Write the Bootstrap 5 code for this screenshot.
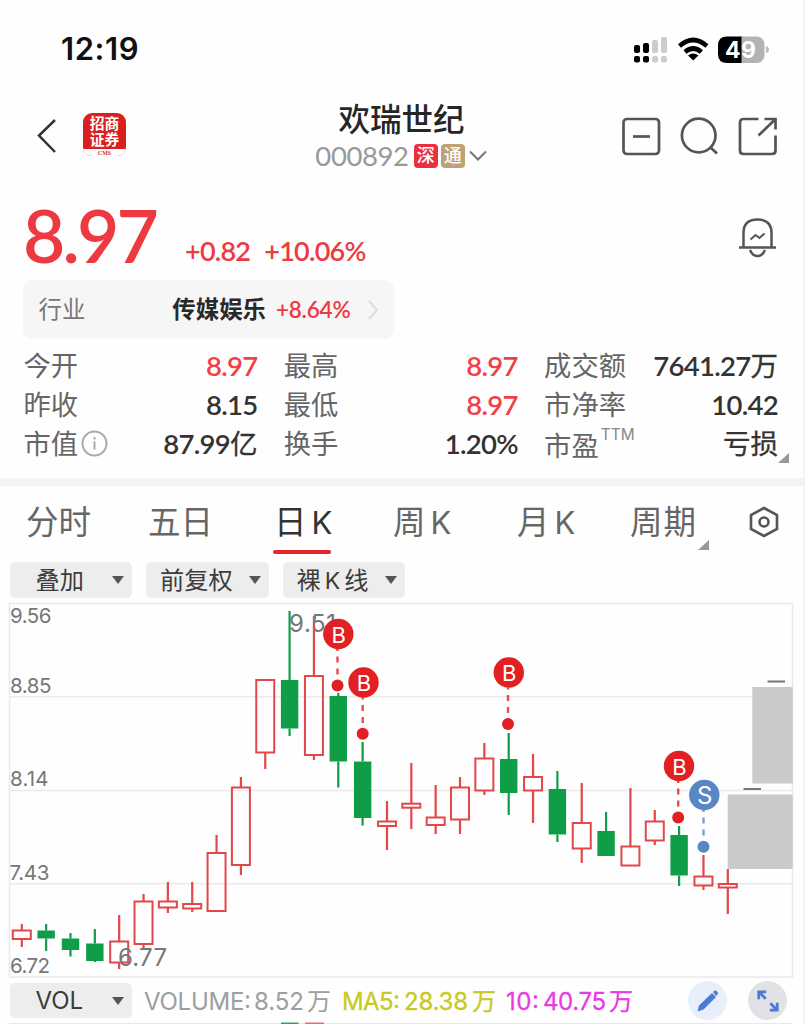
<!DOCTYPE html>
<html lang="zh-CN">
<head>
<meta charset="utf-8">
<meta name="viewport" content="width=device-width, initial-scale=1">
<title>欢瑞世纪 000892</title>
<link href="https://cdn.jsdelivr.net/npm/bootstrap@5.3.0/dist/css/bootstrap.min.css" rel="stylesheet">
<style>
body{font-family:Lato,"Noto Sans CJK SC",sans-serif;background:#fefefe;color:#333;overflow:hidden;line-height:1}
svg{display:block;flex:none}
.screen{width:805px;height:1024px;border-right:2px solid #f4f4f4;overflow:hidden;white-space:nowrap}
.up{color:#ec3a40}
.statusbar{height:97px;padding:0 33px 0 61px}
.clock{font:600 31px/1 Inter,sans-serif;color:#111;letter-spacing:.6px}
.topbar{height:78px;padding:0 25px 0 36px}
.side{width:180px}
.logo{width:43px;height:43px;border-radius:9px;background:#d9201f;color:#fff;overflow:hidden;font-size:14.8px;font-weight:700;line-height:15.5px;padding-top:3px;margin-left:25px;margin-top:-3px}
.logo small{display:block;background:#fff;color:#c33;font:700 6px/9px "Liberation Serif",serif;margin-top:2px;height:9px}
.heading{margin-right:11px;padding-top:1px}
.stock{font-size:31.5px;font-weight:500;color:#262626;line-height:38px}
.code{font-size:27.5px;color:#999;line-height:36px;letter-spacing:-.4px;margin-right:2px}
.tag{width:24px;height:24px;border-radius:4px;color:#fff;font-size:18px;line-height:23px;text-align:center;font-weight:500}
.pricebar{height:105px;padding:0 25px 0 23px}
.price{font-size:73px;font-weight:600;letter-spacing:-2.8px;width:162px}
.delta{font-size:27px;font-weight:600;letter-spacing:-.75px;padding-top:46px}
.industry{width:371px;height:59px;margin-left:22.5px;border-radius:9px;background:#f6f6f6;padding:0 15px 0 16px;font-size:23.4px}
.stats{display:grid;grid-template-columns:234px 234px 234px;column-gap:26.3px;grid-auto-rows:39px;padding:7px 0 0 23.5px;height:139px}
.stats dt{font-weight:400;font-size:27.3px;color:#666}
.stats dd{font-weight:600;font-size:27.5px;color:#333;margin:0;letter-spacing:-.7px}
.stats dd.up{color:#f24046}
.stats dd span{font-weight:400;letter-spacing:0;-webkit-text-stroke:.3px #333}
.ttm{font:400 15.5px/1 Inter,sans-serif;color:#888;margin:-18px 0 0 2px}
.fold{width:0;height:0;border-left:11px solid transparent;border-bottom:10px solid #999}
.divide{height:8px;background:#f3f3f3}
.periods{height:76px;font-size:32.5px;color:#666}
.periods .tabk{position:relative;height:68px;line-height:71px}
.periods i{font-style:normal;font-family:Inter,sans-serif;font-size:31px;margin-left:5px}
.periods .on{color:#333}
.periods .on:after{content:"";position:absolute;left:-1px;right:0;bottom:0;height:4px;border-radius:2px;background:#e7262b}
.pick{width:122.5px;height:35.5px;background:#ededed;border-radius:5px;font-size:24.2px;color:#3c3c3c;padding-top:1px}
.pick:after{content:"";border:6px solid transparent;border-top:8px solid #555;border-bottom:0}
.vols{font-family:Inter,"Noto Sans CJK SC",sans-serif;font-size:23px}
.round{width:39px;height:39px;border-radius:50%}
.ax{font-family:Inter,sans-serif;fill:#777}
</style>
</head>
<body>
<main class="screen d-flex flex-column">
  <div class="statusbar d-flex align-items-center justify-content-between">
    <span class="clock">12:19</span>
    <svg width="138" height="30" viewBox="632 33 138 30">
      <g fill="#000"><rect x="634" y="44" width="6" height="8" rx="2"/><rect x="643" y="42" width="6" height="10" rx="2"/><rect x="634" y="55" width="6" height="6.5" rx="2"/><rect x="643" y="55" width="6" height="6.5" rx="2"/></g>
      <g fill="#ccc"><rect x="652" y="39" width="6" height="13" rx="2"/><rect x="661" y="36" width="6" height="16" rx="2"/><rect x="652" y="55" width="6" height="6.5" rx="2"/><rect x="661" y="55" width="6" height="6.5" rx="2"/></g>
      <g fill="none" stroke="#000" stroke-width="4.6"><path d="M679.5 45q13.700-12 27.400 0M685 51q8.200-7 16.400 0"/></g>
      <path d="M688 54.500q5.200-4 10.400 0L693.200 59.500z"/>
      <path d="M727 35.500h15v26.500h-15q-9 0-9-9v-8.500q0-9 9-9z"/><path d="M741.500 35.500h14q9 0 9 9v8.500q0 9-9 9h-14z" fill="#b3b3b3"/><path d="M766 45q3 1 3 3.500t-3 3.500z" fill="#bbb"/>
      <text x="740.500" y="57" text-anchor="middle" font-family="Inter" font-weight="700" font-size="23" fill="#fff" textLength="31">49</text>
    </svg>
  </div>

  <header class="topbar d-flex align-items-center justify-content-between">
    <div class="side d-flex align-items-center">
      <svg width="22" height="38" viewBox="0 0 22 38" fill="none" stroke="#333" stroke-width="2.500"><path d="M19 3L3 18.500 19 35"/></svg>
      <div class="logo text-center">招商<br>证券<small>CMS</small></div>
    </div>
    <div class="heading d-flex flex-column align-items-center">
      <div class="stock">欢瑞世纪</div>
      <div class="d-flex align-items-center" style="gap:3px">
        <span class="code">000892</span><span class="tag" style="background:#ea2f3d">深</span><span class="tag" style="background:#bca274">通</span>
        <svg width="20" height="14" viewBox="0 0 20 14" fill="none" stroke="#777" stroke-width="2"><path d="M2 2.500l8 8 8-8"/></svg>
      </div>
    </div>
    <div class="side d-flex justify-content-end">
      <svg width="158" height="40" viewBox="620 116 158 40" fill="none" stroke="#555" stroke-width="2.700">
        <rect x="623.500" y="119" width="35.500" height="35" rx="3.500"/><path d="M633 136.500h17"/>
        <circle cx="698.700" cy="135.500" r="16.800"/><path d="M710 147l7 6.500"/>
        <path d="M758.500 119h-15q-3.500 0-3.500 3.500v28q0 3.500 3.500 3.500h28.500q3.500 0 3.500-3.500v-15M758.500 135.500L775 119.500M764.500 119h11v10.500"/>
      </svg>
    </div>
  </header>

  <section class="pricebar d-flex align-items-center">
    <span class="price up" style="padding-top:15px">8.97</span>
    <span class="delta up">+0.82</span>
    <span class="delta up" style="margin-left:14px">+10.06%</span>
    <svg class="ms-auto" style="margin-top:18px" width="40" height="42" viewBox="738 216 40 42" fill="none" stroke="#555" stroke-width="2.500"><path d="M739 247.500h37M743.500 247v-14q0-13.500 14-13.500t14 13.500v14M750 250q2.500 6 7.500 6t7.500-6"/><path d="M750.500 239.500l5-4.500 4 3 5-4.500" stroke-width="2"/></svg>
  </section>

  <section class="industry d-flex align-items-center">
    <span style="color:#777">行业</span>
    <span class="ms-auto fw-bold" style="color:#292929">传媒娱乐</span>
    <span class="up fw-semibold" style="margin-left:10px;font-size:22.500px;letter-spacing:-.2px;padding-top:1px">+8.64%</span>
    <svg style="margin-left:16px" width="12" height="22" viewBox="0 0 12 22" fill="none" stroke="#ddd" stroke-width="2"><path d="M2 2l8 9-8 9"/></svg>
  </section>

  <dl class="stats mb-0">
    <div class="d-flex align-items-center justify-content-between"><dt>今开</dt><dd class="up">8.97</dd></div>
    <div class="d-flex align-items-center justify-content-between"><dt>最高</dt><dd class="up">8.97</dd></div>
    <div class="d-flex align-items-center justify-content-between"><dt>成交额</dt><dd>7641.27<span>万</span></dd></div>
    <div class="d-flex align-items-center justify-content-between"><dt>昨收</dt><dd>8.15</dd></div>
    <div class="d-flex align-items-center justify-content-between"><dt>最低</dt><dd class="up">8.97</dd></div>
    <div class="d-flex align-items-center justify-content-between"><dt>市净率</dt><dd>10.42</dd></div>
    <div class="d-flex align-items-center"><dt>市值</dt><svg style="margin-left:3px" width="27" height="27" viewBox="0 0 27 27" fill="none" stroke="#aaa" stroke-width="2"><circle cx="13.500" cy="13.500" r="12"/><path d="M13.500 11.500v8M13.500 7v2.500"/></svg><dd class="ms-auto">87.99<span>亿</span></dd></div>
    <div class="d-flex align-items-center justify-content-between"><dt>换手</dt><dd>1.20%</dd></div>
    <div class="d-flex align-items-center position-relative"><dt class="pt-1">市盈</dt><span class="ttm">TTM</span><dd class="ms-auto"><span>亏损</span></dd><b class="fold position-absolute" style="right:-11px;bottom:0"></b></div>
  </dl>
  <div class="divide"></div>

  <nav class="periods d-flex" style="padding-left:26px">
    <div class="tabk" style="width:122px">分时</div>
    <div class="tabk" style="width:126px">五日</div>
    <div class="tabk on" style="width:57px">日<i>K</i></div>
    <div class="tabk" style="width:124px;margin-left:62px">周<i>K</i></div>
    <div class="tabk" style="width:113px">月<i>K</i></div>
    <div class="tabk" style="width:79px;letter-spacing:1px">周期<b class="fold position-absolute" style="right:0;bottom:4px"></b></div>
    <svg style="margin:20px 0 0 40px" width="30" height="32" viewBox="0 0 30 32" fill="none" stroke="#555" stroke-width="2.600"><path d="M15 2l13 7v14l-13 7-13-7V9z"/><circle cx="15" cy="16" r="4.500"/></svg>
  </nav>

  <div class="d-flex" style="gap:14px;padding-left:9.500px;height:38px">
    <div class="pick d-flex align-items-center justify-content-between" style="padding-left:26px;padding-right:8px">叠加</div>
    <div class="pick d-flex align-items-center justify-content-between" style="padding-left:14px;padding-right:8px">前复权</div>
    <div class="pick d-flex align-items-center justify-content-between" style="padding-left:14px;padding-right:8px"><span>裸<span style="font-family:Inter;font-size:23px;margin:0 4px">K</span>线</span></div>
  </div>

  <svg id="kline" width="803" height="382" viewBox="0 600 803 382">
    <g fill="none" stroke="#eaeaea" stroke-width="1.600"><rect x="9.500" y="603.500" width="783" height="373.500"/><path d="M10 696.700h782M10 790.500h782M10 883.700h782"/></g>
    <g fill="#cacaca"><rect x="752.300" y="687" width="40.500" height="96.500"/><rect x="727.700" y="794.500" width="65" height="74.500"/></g>
    <path d="M767.500 681.500h17.500M743.500 789h17.500" stroke="#777" stroke-width="2"/>
    <g id="candles"></g>
    <g class="ax" font-size="20.500">
      <text x="10" y="623.300" textLength="41.500">9.56</text><text x="10" y="693.300" textLength="41.500">8.85</text><text x="10" y="786.300" textLength="38.500">8.14</text><text x="9.500" y="879.800" textLength="40">7.43</text><text x="10" y="973.300" textLength="40">6.72</text>
    </g>
    <g class="ax" font-size="24"><text x="289" y="632" textLength="47">9.51</text><text x="118" y="966" textLength="49">6.77</text></g>
    <g id="trades"></g>
  </svg>

  <div class="vols d-flex align-items-center" style="padding-left:9.500px;height:37px;flex:none">
    <div class="pick d-flex align-items-center justify-content-between" style="padding-left:26px;padding-right:8px;font-size:24px">VOL</div>
    <svg width="500" height="36" viewBox="132 983 500 36" font-size="24"><g fill="#9a9fa2"><text x="144" y="1010" textLength="107">VOLUME:</text><text x="254" y="1010" textLength="50">8.52</text><text x="307" y="1010">万</text></g><g fill="#c9ca20" stroke="#c9ca20" stroke-width=".3"><text x="342" y="1010" textLength="58">MA5:</text><text x="404" y="1010" textLength="64">28.38</text><text x="472" y="1010">万</text></g><g fill="#e83be8" stroke="#e83be8" stroke-width=".3"><text x="506" y="1010" textLength="33">10:</text><text x="543" y="1010" textLength="63">40.75</text><text x="609" y="1010">万</text></g></svg>
    <div class="round d-flex align-items-center justify-content-center" style="background:#e9effa;margin-left:56px"><svg width="24" height="24" viewBox="0 0 24 24" fill="#4b7bd5"><path d="M1.500 22.500l1.500-6L16 4l4 4L7.500 20.500zM17 3q2-2 3.200-1.300l1.500 1.500q1 1.300-.4 2.600l-1.300 1.200z"/></svg></div>
    <div class="round d-flex align-items-center justify-content-center" style="background:#e1e2e5;margin-left:21px"><svg width="24" height="24" viewBox="0 0 26 26" fill="none" stroke="#4b7bd5" stroke-width="3"><path d="M3 11V3h8M3.500 3.500l7 7M23 15v8h-8M22.500 22.500l-7-7"/></svg></div>
  </div>
  <svg width="803" height="5" viewBox="0 1019 803 5"><path d="M9 1023.500h784" stroke="#e8e8e8"/><path d="M281 1023.500h17.500" stroke="#2aa65b" stroke-width="2"/><path d="M305 1023.500h19" stroke="#e66" stroke-width="2"/></svg>
</main>

<script src="https://cdn.jsdelivr.net/npm/bootstrap@5.3.0/dist/js/bootstrap.bundle.min.js"></script>
<script>
// direction, high, body top, body bottom, low
const bars = [
 ['r',924,930.5,939,947],['g',924,930.5,938.5,951],['g',933,938.5,950,956.5],['g',929,943.5,961,962],['r',915,941.5,962.5,969],
 ['r',894,901.5,944,948],['r',882,901.5,907.5,913],['r',882,904,908.5,912],['r',835,853,911,911],['r',777,787.5,865,875],
 ['r',680,680,752.5,769],['g',611,680,728.5,736],['r',616,676,755,760],['g',693,696,761.5,787.5],['g',742,761.5,818,825.5],
 ['r',801,821.5,826,850],['r',763,803.7,807.7,829],['r',785,817.5,825,834],['r',777,787.5,819.5,834],['r',743,758.5,790.5,795],
 ['g',733,759,793,815],['r',754,777,790.5,823],['g',771,789,834.5,842],['r',783,823,848.5,863],['g',812,831,856,856],
 ['r',788,846.5,865.5,865.5],['r',810,821.5,840.5,845],['g',826,835,875.5,886],['r',855,876.5,885.5,890],['r',869,884,887.5,914]];
document.getElementById('candles').innerHTML = bars.map(([d,h,t,b,l],i) => {
  const x = 21.8 + i*24.345, c = d==='r' ? '#e2474a' : '#0f9d48';
  return `<path d="M${x} ${h}V${t}M${x} ${b}V${l}" stroke="${c}" stroke-width="2.2"/>` +
    (d==='r' ? `<rect x="${x-9}" y="${t}" width="18" height="${b-t}" fill="none" stroke="${c}" stroke-width="2"/>`
             : `<rect x="${x-8.7}" y="${t}" width="17.400" height="${b-t}" fill="${c}"/>`);
}).join('');
const trades = [['B',338.3,634,685.5],['B',363.5,682.5,733.8],['B',508.8,672.5,724],['B',679,766,817.5],['S',704.3,795,846.700]];
document.getElementById('trades').innerHTML = trades.map(([k,x,y,e]) => {
  const c = k==='B' ? '#e21f23' : '#5987c5';
  return `<path d="M${x-.8} ${y+15}V${e-6}" stroke="${c}" stroke-width="2.400" stroke-dasharray="2 5.500 6 6 6 99" opacity=".8"/>
  <circle cx="${x}" cy="${y}" r="15.2" fill="${c}"/><circle cx="${x-.8}" cy="${e}" r="6" fill="${c}"/>
  <text x="${x+.5}" y="${y+8.5}" text-anchor="middle" font-family="Inter" font-size="${k==='B'?22:24}" fill="#fff">${k}</text>`;
}).join('');
</script>
</body>
</html>
